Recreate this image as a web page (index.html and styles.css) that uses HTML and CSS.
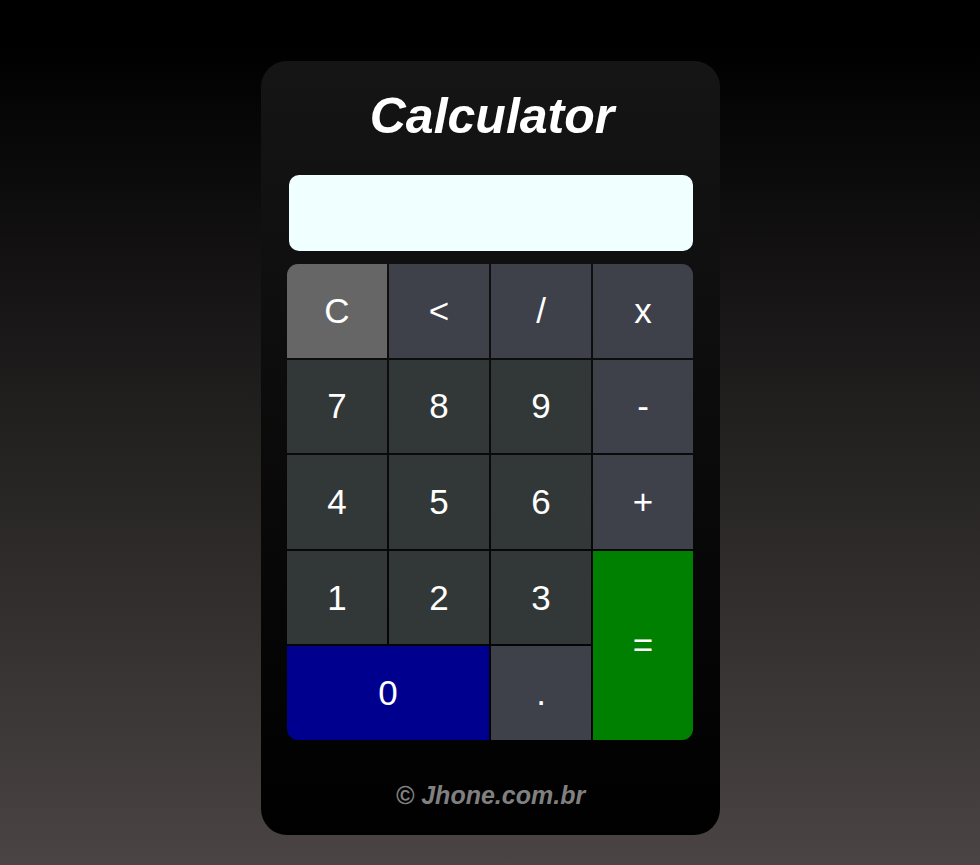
FILE: index.html
```html
<!DOCTYPE html>
<html lang="pt-BR">
<head>
<meta charset="utf-8">
<title>Calculator</title>
<link rel="stylesheet" href="styles.css">
</head>
<body>
<main class="calculator">
  <h1 class="title">Calculator</h1>
  <div class="display"></div>
  <div class="keys">
    <button class="key key-clear">C</button>
    <button class="key key-op">&lt;</button>
    <button class="key key-op">/</button>
    <button class="key key-op">x</button>
    <button class="key">7</button>
    <button class="key">8</button>
    <button class="key">9</button>
    <button class="key key-op">-</button>
    <button class="key">4</button>
    <button class="key">5</button>
    <button class="key">6</button>
    <button class="key key-op">+</button>
    <button class="key">1</button>
    <button class="key">2</button>
    <button class="key">3</button>
    <button class="key key-equals">=</button>
    <button class="key key-zero">0</button>
    <button class="key key-op">.</button>
  </div>
  <footer class="credit">© Jhone.com.br</footer>
</main>
</body>
</html>
```
FILE: styles.css
```css
html {
  min-height: 100%;
  background: linear-gradient(to bottom, #000000 0%, #000000 5%, #4a4444 100%);
}
body {
  margin: 0;
  padding-top: 61px;
  min-height: 865px;
  box-sizing: border-box;
  font-family: "Liberation Sans", Arial, sans-serif;
}
.calculator {
  width: 459px;
  margin: 0 auto;
  box-sizing: border-box;
  padding: 26px 27px 26px 26px;
  border-radius: 26px;
  background: linear-gradient(to bottom, #151515 0%, #000000 100%);
  display: flex;
  flex-direction: column;
}
.title {
  margin: 0;
  padding-left: 5px;
  font-size: 50px;
  line-height: 58px;
  font-weight: bold;
  font-style: italic;
  color: #ffffff;
  text-align: center;
}
.display {
  margin: 30px 0 0 2px;
  height: 76px;
  border-radius: 10px;
  background: #f0ffff;
}
.keys {
  margin-top: 13px;
  display: grid;
  grid-template-columns: repeat(4, 1fr);
  grid-template-rows: repeat(5, 1fr);
  gap: 2px;
  height: 476px;
  border-radius: 11px;
  overflow: hidden;
}
.key {
  border: none;
  margin: 0;
  padding: 0 0 0 1px;
  background: #323837;
  color: #ffffff;
  font-family: "Liberation Sans", Arial, sans-serif;
  font-size: 35px;
}
.key-op {
  background: #3e414a;
}
.key-clear {
  background: #666666;
}
.key-equals {
  background: #008000;
  grid-row: span 2;
}
.key-zero {
  background: #00008f;
  grid-column: span 2;
}
.credit {
  margin-top: 41px;
  padding-left: 2px;
  font-size: 25px;
  line-height: 28px;
  font-weight: bold;
  font-style: italic;
  color: #808080;
  text-align: center;
}
```
